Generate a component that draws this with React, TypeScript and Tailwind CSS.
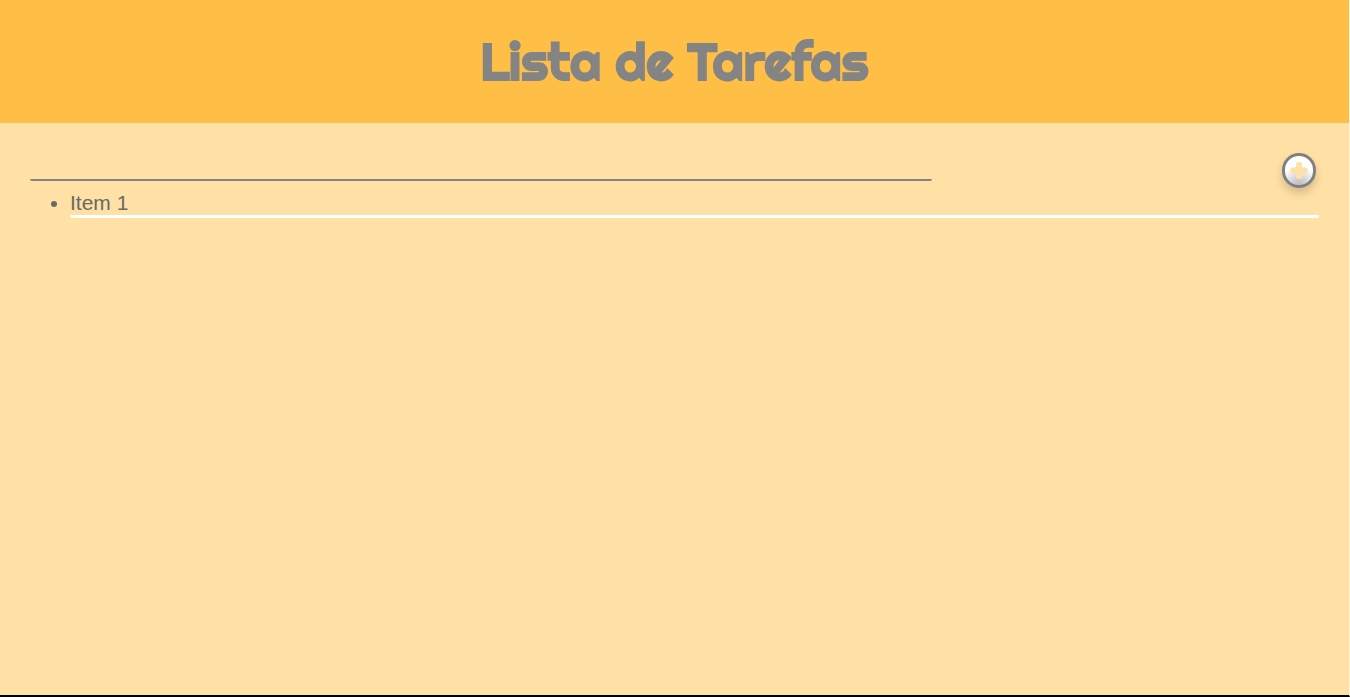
import { useState, type FormEvent } from "react";

export default function App() {
  const [items, setItems] = useState<string[]>(["Item 1"]);
  const [text, setText] = useState("");

  function addItem(event: FormEvent) {
    event.preventDefault();
    const value = text.trim();
    if (!value) return;
    setItems([...items, value]);
    setText("");
  }

  return (
    <div className="flex min-h-screen flex-col border-r border-b-2 border-r-[#fff3df] border-b-black bg-[#ffe0a5] font-['Liberation_Sans',Arial,sans-serif] text-[#696969]">
      <header className="bg-[#ffbf46] py-7">
        <h1 className="text-center font-[Righteous,Inter,sans-serif] text-[51px] leading-[67px] font-normal text-[#848484] [-webkit-text-stroke:2px_#848484]">
          Lista de Tarefas
        </h1>
      </header>
      <main className="p-[30px]">
        <form onSubmit={addItem} className="flex items-start justify-between">
          <input
            type="text"
            aria-label="Nova tarefa"
            value={text}
            onChange={(event) => setText(event.target.value)}
            className="h-7 w-[70%] rounded-xs border-b-2 border-[#848484] bg-transparent text-xl outline-none"
          />
          <button
            type="submit"
            aria-label="Adicionar tarefa"
            className="mr-[3px] flex h-[35px] w-[34px] items-center justify-center rounded-full border-3 border-[#808080] bg-radial-[circle_at_50%_100%] from-[#c4c4c8] from-10% to-white to-60% shadow-[0_5px_8px_rgba(0,0,0,0.17)]"
          >
            <svg viewBox="0 0 18 18" className="size-[18px]" fill="#ffe0a5" aria-hidden="true">
              <rect x="0.5" y="5.5" width="17" height="6" rx="2" />
              <rect x="6" y="0" width="6" height="17" rx="2" />
            </svg>
          </button>
        </form>
        <ul className="list-disc pl-10 text-[21px] leading-6">
          {items.map((item, index) => (
            <li key={index} className="mt-[3px] rounded-xs border-b-3 border-white">
              {item}
            </li>
          ))}
        </ul>
      </main>
    </div>
  );
}
